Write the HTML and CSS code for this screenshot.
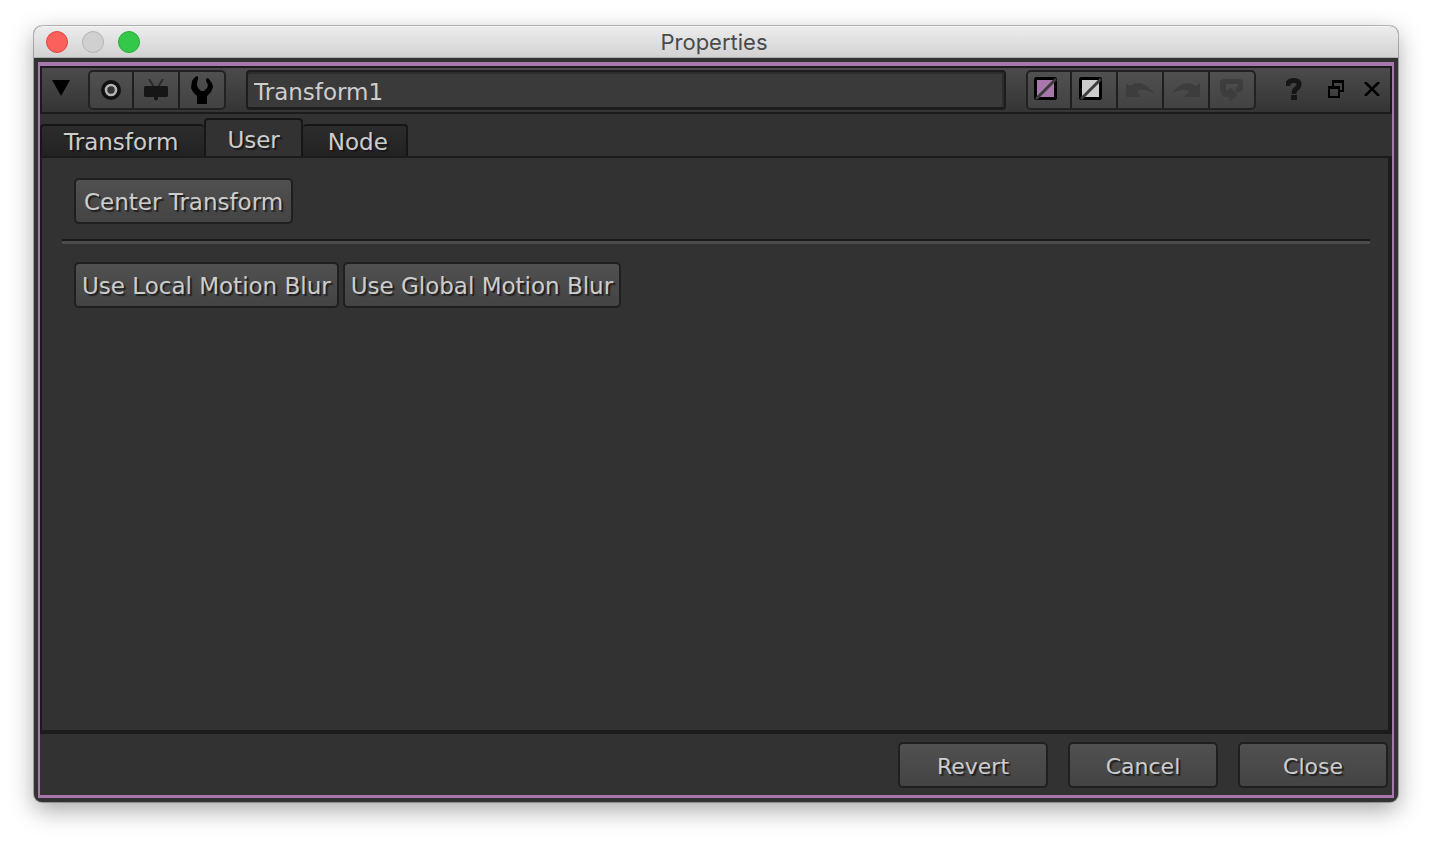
FILE: index.html
```html
<!DOCTYPE html>
<html lang="en">
<head>
    <meta charset="UTF-8">
    <meta name="viewport" content="width=device-width, initial-scale=1.0">
    <title>Properties</title>
    <link rel="stylesheet" href="styles.css">
</head>
<body>
    <div class="window">
        <header class="titlebar">
            <div class="lights">
                <button class="light red" aria-label="Close window"></button>
                <button class="light gray" aria-label="Minimize window"></button>
                <button class="light green" aria-label="Zoom window"></button>
            </div>
            <h1 class="title">Properties</h1>
        </header>

        <main class="content">
            <div class="node-panel">
                <div class="toolbar">
                    <button class="icon-btn collapse" aria-label="Collapse">
                        <svg width="18" height="16" viewBox="0 0 18 16"><path d="M0 0H18L9 16Z"/></svg>
                    </button>
                    <div class="group">
                        <button class="tool" aria-label="Center node">
                            <svg width="20" height="20" viewBox="0 0 20 20"><circle cx="10" cy="10" r="10" fill="#111"/><circle cx="10" cy="10" r="5" fill="#333" stroke="#b4b4b4" stroke-width="2.6"/></svg>
                        </button>
                        <button class="tool" aria-label="Show input">
                            <svg width="24" height="22" viewBox="0 0 24 22"><path d="M5 0L10 8M19 0L14 8" stroke="#2b2b2b" stroke-width="2"/><path d="M1 7H23L24 8V17L23 18H14V20L12 22L10 20V18H1L0 17V8Z" fill="#161616"/></svg>
                        </button>
                        <button class="tool" aria-label="Manage knobs">
                            <svg width="22" height="28" viewBox="0 0 22 28"><path d="M7 0V3Q5 9 7 12L10 15H13L16 12Q18 9 15 5V3L17 2L21 7L22 11L20 16L16 20V28H6V20L2 16L0 12L1 5L4 1Z"/></svg>
                        </button>
                    </div>
                    <input class="node-name" type="text" value="Transform1" aria-label="Node name">
                    <div class="group">
                        <button class="tool swatch" aria-label="Node color">
                            <svg width="24" height="24" viewBox="0 0 24 24"><rect x="1.5" y="1.5" width="20" height="20" rx="1" fill="#a878ac" stroke="#000" stroke-width="3"/><path d="M2 22L22 2" stroke="#3c3c3c" stroke-width="3"/></svg>
                        </button>
                        <button class="tool swatch" aria-label="Control color">
                            <svg width="24" height="24" viewBox="0 0 24 24"><rect x="1.5" y="1.5" width="20" height="20" rx="1" fill="#ccc" stroke="#000" stroke-width="3"/><path d="M2 22L22 2" stroke="#3c3c3c" stroke-width="3"/></svg>
                        </button>
                        <button class="tool" aria-label="Undo" disabled>
                            <svg width="28" height="14" viewBox="0 0 28 14"><path d="M0 0L4 3Q8 0 13 0Q22 1 28 11Q21 6 13 7L11 9L15 13V14H0Z" fill="#3d3d3d"/></svg>
                        </button>
                        <button class="tool" aria-label="Redo" disabled>
                            <svg width="28" height="14" viewBox="0 0 28 14"><path d="M28 0L24 3Q20 0 15 0Q6 1 0 11Q7 6 15 7L17 9L13 13V14H28Z" fill="#3d3d3d"/></svg>
                        </button>
                        <button class="tool" aria-label="Revert knobs" disabled>
                            <svg width="24" height="22" viewBox="0 0 24 22"><path d="M3 0H20L23 2V11L20 13H16V8H18V5H6V11H9V9H11L17 15V17L11 22H9V18H3L0 12V2Z" fill="#3d3d3d"/></svg>
                        </button>
                    </div>
                    <div class="panel-actions">
                        <button class="icon-btn" aria-label="Help">
                            <svg width="16" height="22" viewBox="0 0 16 22"><path d="M2 8V5Q4 2.500 8 2.500Q13 2.500 13 6Q13 9 10 11Q8 12 8 16" fill="none" stroke="#161616" stroke-width="5"/><rect x="5" y="17" width="6" height="5" fill="#161616"/></svg>
                        </button>
                        <button class="icon-btn" aria-label="Float panel">
                            <svg width="16" height="18" viewBox="0 0 16 18" fill="none" stroke="#000" stroke-width="2"><path d="M5 7V1H15V11H12M5 2H15M1 7H11V17H1ZM1 8H11"/></svg>
                        </button>
                        <button class="icon-btn" aria-label="Close panel">
                            <svg width="16" height="14" viewBox="0 0 16 14"><path d="M1 0L15 14M15 0L1 14" stroke="#000" stroke-width="2.5"/></svg>
                        </button>
                    </div>
                </div>

                <div class="tabs" role="tablist">
                    <button class="tab" role="tab" aria-selected="false">Transform</button>
                    <button class="tab active" role="tab" aria-selected="true">User</button>
                    <button class="tab" role="tab" aria-selected="false">Node</button>
                </div>
                <section class="knobs">
                    <div class="row">
                        <button class="btn">Center Transform</button>
                    </div>
                    <hr class="divider">
                    <div class="row">
                        <button class="btn tight">Use Local Motion Blur</button>
                        <button class="btn tight">Use Global Motion Blur</button>
                    </div>
                </section>

                <footer class="footer">
                    <button class="btn">Revert</button>
                    <button class="btn">Cancel</button>
                    <button class="btn">Close</button>
                </footer>
            </div>
        </main>
    </div>
</body>
</html>
```
FILE: styles.css
```css
* {
    box-sizing: border-box;
}
body {
    margin: 0;
    min-height: 100vh;
    padding: 26px 34px 42px;
    display: flex;
    background: #fff;
    font-family: "DejaVu Sans", Verdana, sans-serif;
    font-size: 23px;
    color: #cdcdcd;
}
button, input {
    font: inherit;
    color: inherit;
}
button {
    padding: 0;
    border: 0;
    background: none;
}
svg {
    display: block;
}

/* window frame */
.window {
    flex: 1;
    display: flex;
    flex-direction: column;
    border-radius: 8px;
    overflow: hidden;
    background: #323232;
    box-shadow: 0 0 0 1px rgba(0, 0, 0, 0.25), 0 8px 24px rgba(0, 0, 0, 0.35);
}
.titlebar {
    height: 32px;
    padding: 0 16px 0 12px;
    display: grid;
    grid-template-columns: 1fr auto 1fr;
    align-items: center;
    background: linear-gradient(#ececec, #d2d2d2);
    border-top: 1px solid #f5f5f5;
    border-bottom: 1px solid #acb0ac;
}
.lights {
    display: flex;
    gap: 14px;
}
.light {
    width: 22px;
    height: 22px;
    border-radius: 50%;
    border: 1px solid;
}
.red {
    background: #fc605c;
    border-color: #e0443f;
}
.gray {
    background: #d0d0d0;
    border-color: #b4b4b4;
}
.green {
    background: #34c84a;
    border-color: #25ab36;
}
.title {
    margin: 0;
    font-family: Inter, Roboto, sans-serif;
    font-size: 22px;
    line-height: 28px;
    font-weight: 400;
    color: #4a4a4a;
}

/* node panel */
.content {
    flex: 1;
    display: flex;
    padding: 4px;
}
.node-panel {
    flex: 1;
    min-width: 0;
    display: flex;
    flex-direction: column;
    border: solid #a878ac;
    border-width: 4px 2px 3px;
}
.toolbar {
    height: 48px;
    padding: 0 10px;
    display: flex;
    align-items: center;
    border: 2px solid #1b1b1b;
    background: linear-gradient(#4b4b4b, #353535);
}
.collapse {
    margin-right: 18px;
    padding-bottom: 4px;
}
.group {
    display: flex;
    height: 40px;
    border: 2px solid #222;
    border-radius: 5px;
    background: linear-gradient(#505050, #424242);
}
.tool {
    width: 46px;
    display: flex;
    align-items: center;
    justify-content: center;
    border-left: 2px solid #1e1e1e;
}
.tool:first-child {
    width: 42px;
    border-left: 0;
}
.swatch {
    padding: 0 6px 2px 0;
}
.node-name {
    flex: 1;
    min-width: 0;
    height: 40px;
    margin: 0 20px;
    padding: 4px 6px 0;
    border: 2px solid #1c1c1c;
    border-bottom-width: 3px;
    border-radius: 4px;
    background: #3a3a3a;
    box-shadow: inset 0 2px 0 #2c2c2c, inset -2px 0 0 #2c2c2c;
}
.panel-actions {
    display: flex;
    align-items: center;
    gap: 20px;
    padding: 0 0 2px 30px;
}
.panel-actions .icon-btn:first-child {
    margin-right: 6px;
}

/* tabs */
.tabs {
    height: 44px;
    margin-bottom: -2px;
    padding-top: 4px;
    display: flex;
    align-items: flex-end;
}
.tab {
    height: 34px;
    padding: 2px 26px 0 22px;
    border: 2px solid #161616;
    border-radius: 4px 4px 0 0;
    background: linear-gradient(#2c2c2c, #222);
    text-shadow: 2px 2px 1px #181818;
}
.tab:first-child {
    border-right: 0;
}
.tab:last-child {
    padding: 2px 18px 0 25px;
    border-left: 0;
}
.tab.active {
    height: 40px;
    padding: 2px 21px 0;
    border-bottom: 0;
    background: #323232;
}
.knobs {
    flex: 1;
    padding: 20px 18px 20px 20px;
    border: 2px solid #1b1b1b;
    border-bottom-width: 4px;
    border-right-width: 4px;
}
.row {
    display: flex;
    flex-wrap: wrap;
    gap: 4px;
    padding-left: 12px;
}
.btn {
    height: 46px;
    padding: 2px 8px 0;
    border: 2px solid #1f1f1f;
    border-radius: 5px;
    background: linear-gradient(#505050, #444);
    text-shadow: 2px 2px 1px #202020;
}
.tight {
    padding: 2px 6px 0;
}
.divider {
    height: 5px;
    margin: 15px 0 18px;
    border: 0;
    border-top: 2px solid #1a1a1a;
    background: #4b4b4b;
}
.footer {
    display: flex;
    justify-content: flex-end;
    gap: 20px;
    padding: 8px 4px 7px;
}
.footer .btn {
    width: 150px;
    font-size: 22px;
}
```
